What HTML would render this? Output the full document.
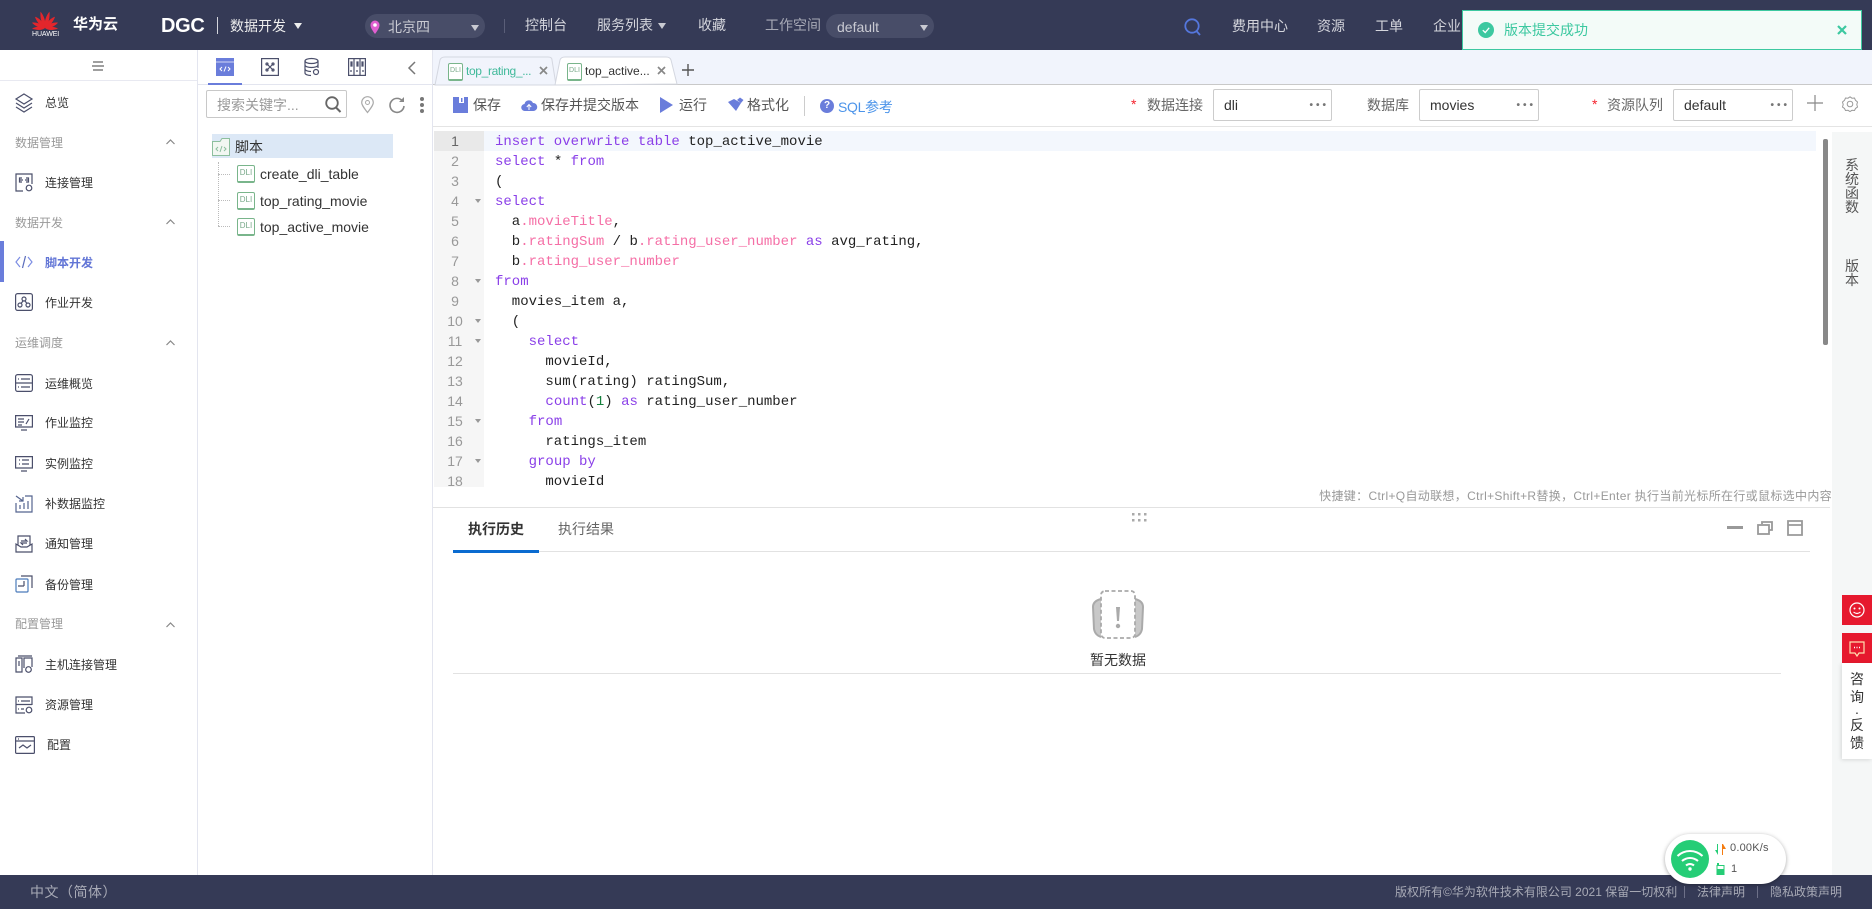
<!DOCTYPE html>
<html lang="zh-CN"><head><meta charset="utf-8"><title>DGC</title>
<style>
*{box-sizing:border-box}
html,body{margin:0;padding:0;width:1872px;height:909px;overflow:hidden;background:#fff;font-family:"Liberation Sans","Noto Sans CJK SC",sans-serif;color:#333}
.a{position:absolute}
.t{position:absolute;white-space:nowrap;line-height:20px;height:20px;font-size:14px}
.hd{color:#d4d5dc}
.s{font-size:12px;color:#333}
.sec{font-size:12px;color:#999;left:15px}
svg{position:absolute;overflow:visible}
.ic{fill:none;stroke:#4b4f6b;stroke-width:1.2}
.code{position:absolute;left:495px;top:131px;width:1320px;height:356px;overflow:hidden;font:14px/20px "Liberation Mono",monospace;color:#222;white-space:pre;padding-top:1px}
.code div{height:20px}
.k{color:#8a3fe8}.p{color:#f56fa6}
.ln{position:absolute;left:434px;top:131px;width:50px;height:356px;overflow:hidden;background:#f6f6f6;color:#999;font-size:14px;line-height:20px}
.ln div{height:20px;text-align:center;padding-right:8px}
.fold{position:absolute;left:475px;width:0;height:0;border-left:3.5px solid transparent;border-right:3.5px solid transparent;border-top:4px solid #999}
.sel{position:absolute;top:89px;height:32px;background:#fff;border:1px solid #ccc;border-radius:2px;font-size:14px;line-height:31px;padding-left:10px;color:#333}
.sel i{position:absolute;right:2px;top:0;font-style:normal;color:#777;font-size:10px;letter-spacing:3px;font-weight:bold}
.tri{position:absolute;width:0;height:0;border-left:4px solid transparent;border-right:4px solid transparent;border-top:6px solid #c9cad2}
.dli{position:absolute;width:18px;height:18px;border:1px solid #79b58b;border-bottom:2.5px solid #79b58b;border-radius:2px;font-size:8px;line-height:13px;text-align:center;color:#79a98a;background:#fff}
</style></head><body>

<!-- header -->
<div class="a" style="left:0;top:0;width:1872px;height:50px;background:#353a56"></div>
<svg style="left:32px;top:10px" width="26" height="19" viewBox="-13 -18 26 19">
<g fill="#e3262c"><path d="M0 0C-3 -5 -2.500 -12 -1 -17C1.500 -13 2.500 -5 0 0Z" transform="rotate(-12)"/><path d="M0 0C-3 -5 -2.500 -12 -1 -17C1.500 -13 2.500 -5 0 0Z" transform="rotate(12) scale(-1 1)"/><path d="M0 0C-3 -5 -2.500 -11 -1 -15C1.500 -12 2.500 -5 0 0Z" transform="rotate(-38)"/><path d="M0 0C-3 -5 -2.500 -11 -1 -15C1.500 -12 2.500 -5 0 0Z" transform="rotate(38) scale(-1 1)"/><path d="M0 0C-3 -4 -2.500 -10 -1 -14C1.500 -11 2.500 -4 0 0Z" transform="rotate(-64)"/><path d="M0 0C-3 -4 -2.500 -10 -1 -14C1.500 -11 2.500 -4 0 0Z" transform="rotate(64) scale(-1 1)"/><path d="M0 0C-3 -3 -2.500 -9 -1 -13C1 -10 2 -4 0 0Z" transform="rotate(-88)"/><path d="M0 0C-3 -3 -2.500 -9 -1 -13C1 -10 2 -4 0 0Z" transform="rotate(88) scale(-1 1)"/></g></svg>
<div class="t" style="left:32px;top:25px;color:#fff;font-size:7px;letter-spacing:-.1px">HUAWEI</div>
<div class="t" style="left:73px;top:15px;color:#fff;font-size:15px;font-weight:bold">华为云</div>
<div class="t" style="left:161px;top:16px;color:#fff;font-size:20px;font-weight:bold;letter-spacing:-.3px">DGC</div>
<div class="a" style="left:217px;top:17px;width:1px;height:17px;background:#d4d5dc"></div>
<div class="t hd" style="left:230px;top:16px;color:#eee">数据开发</div>
<div class="tri" style="left:294px;top:23px;border-top-color:#eee"></div>
<div class="a" style="left:365px;top:14px;width:120px;height:24px;border-radius:12px;background:#484d68"></div>
<svg style="left:370px;top:20px" width="10" height="14" viewBox="0 0 10 14"><path d="M5 14C2 10 .5 7.500 .5 5A4.500 4.500 0 0 1 9.500 5C9.500 7.500 8 10 5 14Z" fill="#e05fd0"/><circle cx="5" cy="5" r="1.800" fill="#fff"/></svg>
<div class="t hd" style="left:388px;top:17px;color:#c9cad2">北京四</div>
<div class="tri" style="left:471px;top:25px"></div>
<div class="a" style="left:504px;top:19px;width:1px;height:14px;background:#5a5e78"></div>
<div class="t hd" style="left:525px;top:15px">控制台</div>
<div class="t hd" style="left:597px;top:15px">服务列表</div>
<div class="tri" style="left:658px;top:23px"></div>
<div class="t hd" style="left:698px;top:15px">收藏</div>
<div class="t" style="left:765px;top:15px;color:#a7a9b6">工作空间</div>
<div class="a" style="left:826px;top:14px;width:108px;height:24px;border-radius:12px;background:#484d68"></div>
<div class="t" style="left:837px;top:17px;color:#c9cad2">default</div>
<div class="tri" style="left:920px;top:25px"></div>
<svg style="left:1184px;top:18px" width="18" height="18" viewBox="0 0 18 18"><circle cx="8" cy="8" r="6.700" fill="none" stroke="#5577dd" stroke-width="1.800"/><path d="M12.500 13L16 17" stroke="#5577dd" stroke-width="1.800"/></svg>
<div class="t hd" style="left:1232px;top:16px">费用中心</div>
<div class="t hd" style="left:1317px;top:16px">资源</div>
<div class="t hd" style="left:1375px;top:16px">工单</div>
<div class="t hd" style="left:1433px;top:16px">企业</div>

<!-- toast -->
<div class="a" style="left:1462px;top:10px;width:400px;height:40px;background:#f3fbf8;border:1px solid #3cc8a0"></div>
<svg style="left:1478px;top:22px" width="16" height="16" viewBox="0 0 16 16"><circle cx="8" cy="8" r="8" fill="#3cc8a0"/><path d="M4.800 8.200L7.200 10.500L11.200 5.800" fill="none" stroke="#fff" stroke-width="1.300"/></svg>
<div class="t" style="left:1504px;top:20px;color:#3cc8a0">版本提交成功</div>
<svg style="left:1837px;top:25px" width="10" height="10" viewBox="0 0 10 10"><path d="M1 1L9 9M9 1L1 9" stroke="#3cc8a0" stroke-width="2.200"/></svg>

<!-- sidebar -->
<div class="a" style="left:197px;top:50px;width:1px;height:825px;background:#e3e5ef"></div>
<div class="a" style="left:0;top:80px;width:197px;height:1px;background:#e8e9f1"></div>
<svg style="left:92px;top:61px" width="12" height="10" viewBox="0 0 12 10"><path d="M1 1H11M0 5H12M1 9H11" stroke="#666" stroke-width="1.300"/></svg>

<svg class="ic" style="left:15px;top:93px" width="18" height="20" viewBox="0 0 18 20"><path d="M9 1L17 6L9 11L1 6ZM1 10L9 15L17 10M1 14L9 19L17 14"/></svg>
<div class="t s" style="left:45px;top:93px">总览</div>
<div class="t sec" style="top:133px">数据管理</div>
<svg class="ic" style="left:166px;top:139px" width="9" height="6" viewBox="0 0 9 6"><path d="M.5 5L4.500 1L8.500 5" stroke="#888"/></svg>
<svg class="ic" style="left:15px;top:173px" width="18" height="19" viewBox="0 0 18 19"><path d="M8 18H1V1H17V11"/><path d="M5 7H8M10 7H13M7 5H4.500V9H7M11 5H13.500V9H11"/><circle cx="14" cy="15" r="2.800"/></svg>
<div class="t s" style="left:45px;top:173px">连接管理</div>
<div class="t sec" style="top:213px">数据开发</div>
<svg class="ic" style="left:166px;top:219px" width="9" height="6" viewBox="0 0 9 6"><path d="M.5 5L4.500 1L8.500 5" stroke="#888"/></svg>
<div class="a" style="left:0;top:241px;width:4px;height:41px;background:#6a7ddb"></div>
<svg style="left:15px;top:255px" width="18" height="14" viewBox="0 0 18 14"><path d="M5 2L1 7L5 12M13 2L17 7L13 12" fill="none" stroke="#7c8de3" stroke-width="1.200"/><path d="M10.500 1L7.500 13" fill="none" stroke="#5b6dbb" stroke-width="1.200"/></svg>
<div class="t s" style="left:45px;top:253px;color:#6275d6;font-weight:bold">脚本开发</div>
<svg class="ic" style="left:15px;top:293px" width="18" height="18" viewBox="0 0 18 18"><rect x=".6" y=".6" width="16.800" height="16.800" rx="2"/><circle cx="9" cy="6" r="2"/><circle cx="5" cy="12" r="2"/><circle cx="13" cy="12" r="2"/><path d="M8 8L6 10.500M10 8L12 10.500"/></svg>
<div class="t s" style="left:45px;top:293px">作业开发</div>
<div class="t sec" style="top:333px">运维调度</div>
<svg class="ic" style="left:166px;top:340px" width="9" height="6" viewBox="0 0 9 6"><path d="M.5 5L4.500 1L8.500 5" stroke="#888"/></svg>
<svg class="ic" style="left:15px;top:374px" width="18" height="18" viewBox="0 0 18 18"><rect x=".6" y=".6" width="16.800" height="16.800" rx="2"/><path d="M1 9H17M3 5H4M6 5H15M3 13H4M6 13H15"/></svg>
<div class="t s" style="left:45px;top:374px">运维概览</div>
<svg class="ic" style="left:15px;top:415px" width="18" height="16" viewBox="0 0 18 16"><path d="M.6 .6H17.400V12H.6ZM6 15H12M3 4H9M3 7H9M3 10H7M11 9L14 4"/></svg>
<div class="t s" style="left:45px;top:413px">作业监控</div>
<svg class="ic" style="left:15px;top:456px" width="18" height="16" viewBox="0 0 18 16"><path d="M.6 .6H17.400V12H.6ZM6 15H12M4 4H5M7 4H14M4 8H5M7 8H14"/></svg>
<div class="t s" style="left:45px;top:454px">实例监控</div>
<svg class="ic" style="left:15px;top:495px" width="18" height="18" viewBox="0 0 18 18"><path d="M1 8V17H17V1H10M1 1L8 6M8 2V6H4M5 14V10M9 14V8M13 14V6" stroke="#55648f"/></svg>
<div class="t s" style="left:45px;top:494px">补数据监控</div>
<svg class="ic" style="left:15px;top:535px" width="18" height="18" viewBox="0 0 18 18"><path d="M1 9V17H17V9L12 12H6ZM3 10V1H15V10M6 6H12L10 4M12 8H6L8 10"/></svg>
<div class="t s" style="left:45px;top:534px">通知管理</div>
<svg class="ic" style="left:15px;top:575px" width="18" height="18" viewBox="0 0 18 18"><rect x="1" y="4" width="12" height="13" rx="1" stroke="#4b7bbb"/><path d="M6 1H17V13M3 11H9M9 6V11"/></svg>
<div class="t s" style="left:45px;top:575px">备份管理</div>
<div class="t sec" style="top:614px">配置管理</div>
<svg class="ic" style="left:166px;top:622px" width="9" height="6" viewBox="0 0 9 6"><path d="M.5 5L4.500 1L8.500 5" stroke="#888"/></svg>
<svg class="ic" style="left:15px;top:655px" width="18" height="18" viewBox="0 0 18 18"><path d="M1 17V3H7V17ZM9 13V3H17V12M4 6V11M3 1H17"/><circle cx="13.500" cy="14.500" r="2.800"/></svg>
<div class="t s" style="left:45px;top:655px">主机连接管理</div>
<svg class="ic" style="left:15px;top:696px" width="18" height="18" viewBox="0 0 18 18"><path d="M10 17H1V1H17V9M1 8.500H17M3 5H4M6 5H15M3 13H4M6 13H9"/><circle cx="14" cy="14" r="2.800"/></svg>
<div class="t s" style="left:45px;top:695px">资源管理</div>
<svg class="ic" style="left:15px;top:736px" width="20" height="18" viewBox="0 0 20 18"><rect x=".6" y=".6" width="18.800" height="16.800" rx="1"/><path d="M1 5H19M3 3H4M4 12L8 9L12 12L16 9"/></svg>
<div class="t s" style="left:47px;top:735px">配置</div>

<!-- tree panel -->
<div class="a" style="left:198px;top:84px;width:234px;height:1px;background:#e3e5ef"></div>
<div class="a" style="left:432px;top:50px;width:1px;height:825px;background:#e3e5ef"></div>
<div class="a" style="left:208px;top:83px;width:34px;height:2px;background:#6a7ddb"></div>
<svg style="left:216px;top:58px" width="18" height="18" viewBox="0 0 18 18"><rect width="18" height="18" fill="#6a7ddb"/><rect y="3.500" width="18" height="1" fill="#fff" opacity=".7"/><path d="M6 9L4 11L6 13M12 9L14 11L12 13M10 8.500L8 13.500" stroke="#fff" fill="none"/></svg>
<svg class="ic" style="left:261px;top:58px" width="18" height="18" viewBox="0 0 18 18"><rect x=".6" y=".6" width="16.800" height="16.800"/><circle cx="6" cy="6" r="1"/><circle cx="12" cy="6" r="1"/><circle cx="6" cy="12" r="1"/><circle cx="12" cy="12" r="1"/><path d="M6 6L12 12M12 6L6 12"/></svg>
<svg class="ic" style="left:304px;top:58px" width="16" height="18" viewBox="0 0 16 18"><ellipse cx="7.500" cy="3" rx="6.500" ry="2.500"/><path d="M1 3V15C1 16.500 4 17.500 7 17.500M14 3V10M1 7C1 8.500 4 9.500 7.500 9.500S14 8.500 14 7M1 11C1 12.500 4 13.500 7 13.500"/><circle cx="12" cy="14" r="2.500"/></svg>
<svg class="ic" style="left:348px;top:58px" width="18" height="18" viewBox="0 0 18 18"><rect x=".6" y=".6" width="16.800" height="16.800"/><path d="M6 1V17M12 1V17M3 4V8H4V4ZM9 4V8H10V4ZM14 4V8H15V4ZM2 13H4M8 13H10M14 13H16"/></svg>
<svg style="left:408px;top:61px" width="8" height="14" viewBox="0 0 8 14"><path d="M7 1L1 7L7 13" fill="none" stroke="#777" stroke-width="1.500"/></svg>
<div class="a" style="left:206px;top:90px;width:141px;height:28px;border:1px solid #c8c8c8;border-radius:2px"></div>
<div class="t" style="left:217px;top:95px;color:#999">搜索关键字...</div>
<svg style="left:325px;top:96px" width="17" height="17" viewBox="0 0 17 17"><circle cx="7" cy="7" r="5.800" fill="none" stroke="#666" stroke-width="1.800"/><path d="M11 11.500L15.500 16" stroke="#666" stroke-width="2"/></svg>
<svg style="left:361px;top:96px" width="13" height="17" viewBox="0 0 13 17"><path d="M6.500 16.500C3 12 .7 9 .7 6.500A5.800 5.800 0 0 1 12.300 6.500C12.300 9 10 12 6.500 16.500Z" fill="none" stroke="#aaa" stroke-width="1.200"/><circle cx="6.500" cy="6.500" r="2" fill="none" stroke="#aaa"/></svg>
<svg style="left:389px;top:96px" width="16" height="17" viewBox="0 0 16 17"><path d="M13.500 5A7 7 0 1 0 15 10" fill="none" stroke="#888" stroke-width="1.600"/><path d="M15 1V6H10" fill="#888"/></svg>
<div class="a" style="left:420px;top:97px;width:4px;height:4px;border-radius:50%;background:#777;box-shadow:0 6px 0 #777,0 12px 0 #777"></div>
<div class="a" style="left:212px;top:134px;width:181px;height:24px;background:#dce8f6"></div>
<svg style="left:212px;top:138px" width="18" height="18" viewBox="0 0 18 18"><path d="M.5 3.500H8L10 .5H17.500V17.500H.5Z" fill="#f2f7f2" stroke="#8dbf9e"/><path d="M6 9L4 11L6 13M12 9L14 11L12 13M10 8L8 14" stroke="#8dbf9e" fill="none"/></svg>
<div class="t" style="left:235px;top:137px">脚本</div>
<div class="a" style="left:218px;top:162px;height:64px;border-left:1px dotted #bbb"></div>
<div class="a" style="left:218px;top:174px;width:12px;border-top:1px dotted #bbb"></div>
<div class="a" style="left:218px;top:200px;width:12px;border-top:1px dotted #bbb"></div>
<div class="a" style="left:218px;top:226px;width:12px;border-top:1px dotted #bbb"></div>
<div class="dli" style="left:237px;top:165px">DLI</div><div class="t" style="left:260px;top:164px">create_dli_table</div>
<div class="dli" style="left:237px;top:192px">DLI</div><div class="t" style="left:260px;top:191px">top_rating_movie</div>
<div class="dli" style="left:237px;top:218px">DLI</div><div class="t" style="left:260px;top:217px">top_active_movie</div>

<!-- tab strip -->
<div class="a" style="left:433px;top:50px;width:1439px;height:34px;background:#f1f4fc"></div>
<div class="a" style="left:433px;top:84px;width:1439px;height:1px;background:#c9c9c9"></div>
<svg style="left:434px;top:56px" width="250" height="29" viewBox="0 0 250 29"><path d="M1 29L6 4Q7 1 11 1H114Q118 1 118 4L122 29Z" fill="#f1f4fc" stroke="#d4d7e0"/><path d="M121 29L126 4Q127 1 131 1H232Q236 1 237 4L243 28Z" fill="#fff" stroke="#d4d7e0"/></svg>
<div class="dli" style="left:448px;top:63px;width:15px;height:18px;font-size:7px">DLI</div>
<div class="t" style="left:466px;top:61px;font-size:12px;color:#3fb99a;letter-spacing:-.35px">top_rating_...</div>
<svg style="left:539px;top:66px" width="9" height="9" viewBox="0 0 9 9"><path d="M1 1L8 8M8 1L1 8" stroke="#888" stroke-width="1.700"/></svg>
<div class="dli" style="left:567px;top:63px;width:15px;height:18px;font-size:7px">DLI</div>
<div class="t" style="left:585px;top:61px;font-size:12px;color:#333">top_active...</div>
<svg style="left:657px;top:66px" width="9" height="9" viewBox="0 0 9 9"><path d="M1 1L8 8M8 1L1 8" stroke="#888" stroke-width="1.700"/></svg>
<svg style="left:682px;top:64px" width="12" height="12" viewBox="0 0 12 12"><path d="M6 0V12M0 6H12" stroke="#555" stroke-width="1.400"/></svg>

<!-- toolbar -->
<div class="a" style="left:433px;top:126px;width:1439px;height:1px;background:#e4e4e4"></div>
<svg style="left:453px;top:97px" width="15" height="16" viewBox="0 0 15 16"><path d="M0 0H15V16H0Z" fill="#6a7ddb"/><rect x="6" y="0" width="5" height="6" fill="#fff"/><rect x="8" y="1" width="1.500" height="4" fill="#6a7ddb"/></svg>
<div class="t" style="left:473px;top:95px;color:#555">保存</div>
<svg style="left:521px;top:98px" width="16" height="14" viewBox="0 0 16 14"><path d="M4 13A3.500 3.500 0 0 1 3.500 6A4.500 4.500 0 0 1 12 5A4 4 0 0 1 12.500 13Z" fill="#6a7ddb"/><path d="M8 12V7M5.800 9L8 6.500L10.200 9" stroke="#fff" fill="none"/></svg>
<div class="t" style="left:541px;top:95px;color:#555">保存并提交版本</div>
<svg style="left:660px;top:97px" width="13" height="16" viewBox="0 0 13 16"><path d="M0 0L13 8L0 16Z" fill="#6a7ddb"/></svg>
<div class="t" style="left:679px;top:95px;color:#555">运行</div>
<svg style="left:728px;top:97px" width="16" height="15" viewBox="0 0 16 15"><path d="M0 5L8 14L13 6L6 2ZM9 3L12 .5L15.500 3L13 6Z" fill="#6a7ddb"/></svg>
<div class="t" style="left:747px;top:95px;color:#555">格式化</div>
<div class="a" style="left:804px;top:96px;width:1px;height:20px;background:#ccc"></div>
<div class="a" style="left:820px;top:99px;width:14px;height:14px;border-radius:50%;background:#6a7ddb;color:#fff;font-size:10px;font-weight:bold;line-height:14px;text-align:center">?</div>
<div class="t" style="left:838px;top:97px;color:#4c94ea;letter-spacing:-.3px">SQL参考</div>
<div class="t" style="left:1131px;top:94px;color:#f5222d;font-size:14px">*</div>
<div class="t" style="left:1147px;top:95px;color:#666">数据连接</div>
<div class="sel" style="left:1213px;width:119px">dli<i>•••</i></div>
<div class="t" style="left:1367px;top:95px;color:#666">数据库</div>
<div class="sel" style="left:1419px;width:120px">movies<i>•••</i></div>
<div class="t" style="left:1592px;top:94px;color:#f5222d">*</div>
<div class="t" style="left:1607px;top:95px;color:#666">资源队列</div>
<div class="sel" style="left:1673px;width:120px">default<i>•••</i></div>
<svg style="left:1807px;top:95px" width="16" height="16" viewBox="0 0 16 16"><path d="M8 0V16M0 8H16" stroke="#888" stroke-width="1.200"/></svg>
<svg style="left:1842px;top:96px" width="16" height="16" viewBox="0 0 16 16"><path d="M8 .8L10 2.200L12.500 2L13.500 4.300L15.500 6L14.800 8.500L15.500 11L13.500 12.500L12.500 14.500L10 14.300L8 15.500L6 14.300L3.500 14.500L2.500 12.500L.5 11L1.200 8.500L.5 6L2.500 4.300L3.500 2L6 2.200Z" fill="none" stroke="#999"/><circle cx="8" cy="8" r="2.800" fill="none" stroke="#999"/></svg>

<!-- editor -->
<div class="a" style="left:484px;top:131px;width:1332px;height:20px;background:#f3f7fd"></div>
<div class="ln"><div style="background:#e9e9e9;color:#666">1</div><div>2</div><div>3</div><div>4</div><div>5</div><div>6</div><div>7</div><div>8</div><div>9</div><div>10</div><div>11</div><div>12</div><div>13</div><div>14</div><div>15</div><div>16</div><div>17</div><div>18</div></div>
<div class="fold" style="top:199px"></div><div class="fold" style="top:279px"></div><div class="fold" style="top:319px"></div><div class="fold" style="top:339px"></div><div class="fold" style="top:419px"></div><div class="fold" style="top:459px"></div>
<div class="code"><div><span class="k">insert overwrite table</span> top_active_movie</div><div><span class="k">select</span> * <span class="k">from</span></div><div>(</div><div><span class="k">select</span></div><div>  a<span class="p">.movieTitle</span>,</div><div>  b<span class="p">.ratingSum</span> / b<span class="p">.rating_user_number</span> <span class="k">as</span> avg_rating,</div><div>  b<span class="p">.rating_user_number</span></div><div><span class="k">from</span></div><div>  movies_item a,</div><div>  (</div><div>    <span class="k">select</span></div><div>      movieId,</div><div>      sum(rating) ratingSum,</div><div>      <span class="k">count</span>(<span style="color:#15803d">1</span>) <span class="k">as</span> rating_user_number</div><div>    <span class="k">from</span></div><div>      ratings_item</div><div>    <span class="k">group by</span></div><div>      movieId</div></div>
<div class="a" style="left:1823px;top:139px;width:5px;height:206px;background:#888;border-radius:2px"></div>
<div class="t" style="right:40px;top:486px;font-size:12px;color:#999;letter-spacing:.33px">快捷键：Ctrl+Q自动联想，Ctrl+Shift+R替换，Ctrl+Enter 执行当前光标所在行或鼠标选中内容</div>
<div class="a" style="left:433px;top:507px;width:1397px;height:1px;background:#e2e2e2"></div>

<!-- right rail -->
<div class="a" style="left:1832px;top:132px;width:40px;height:743px;background:#f5f7f7"></div>
<div class="a" style="left:1845px;top:158px;width:14px;font-size:14px;line-height:14px;color:#555">系统函数</div>
<div class="a" style="left:1845px;top:259px;width:14px;font-size:14px;line-height:14px;color:#555">版本</div>

<!-- drag dots -->
<svg style="left:1132px;top:513px" width="17" height="9" viewBox="0 0 17 9"><g fill="#aaa"><rect x="0" y="0" width="2.500" height="2.500"/><rect x="6" y="0" width="2.500" height="2.500"/><rect x="12" y="0" width="2.500" height="2.500"/><rect x="0" y="6" width="2.500" height="2.500"/><rect x="6" y="6" width="2.500" height="2.500"/><rect x="12" y="6" width="2.500" height="2.500"/></g></svg>

<!-- bottom panel -->
<div class="t" style="left:468px;top:519px;font-weight:bold;color:#333">执行历史</div>
<div class="t" style="left:558px;top:519px;color:#666">执行结果</div>
<div class="a" style="left:453px;top:551px;width:1357px;height:1px;background:#e2e2e2"></div>
<div class="a" style="left:453px;top:550px;width:86px;height:3px;background:#0a6bd0"></div>
<div class="a" style="left:1727px;top:526px;width:16px;height:3px;background:#999"></div>
<svg style="left:1757px;top:521px" width="16" height="14" viewBox="0 0 16 14"><path d="M5 3V1H15V9H12" fill="none" stroke="#999" stroke-width="1.800"/><rect x="1" y="4" width="11" height="9" fill="#fff" stroke="#999" stroke-width="1.800"/></svg>
<svg style="left:1787px;top:520px" width="16" height="16" viewBox="0 0 16 16"><path d="M1 1H15V15H1ZM1 5H15" fill="none" stroke="#999" stroke-width="1.800"/></svg>

<svg style="left:1091px;top:589px" width="54" height="52" viewBox="0 0 54 52">
<path d="M10 10Q2 12 2 18L3 40Q4 46 10 48M44 10Q52 12 52 18L51 40Q50 46 44 48" fill="#c8c8c8" stroke="#aaa" stroke-width="2"/>
<rect x="10" y="2" width="34" height="47" rx="4" fill="#fff" stroke="#aaa" stroke-width="1.800" stroke-dasharray="4 2.500"/>
<path d="M25 18H29L28 32H26Z" fill="#aaa"/><circle cx="27" cy="37" r="2.200" fill="#aaa"/></svg>
<div class="t" style="left:1090px;top:650px;color:#333">暂无数据</div>
<div class="a" style="left:453px;top:673px;width:1328px;height:1px;background:#e2e2e2"></div>

<!-- feedback -->
<div class="a" style="left:1842px;top:595px;width:30px;height:30px;background:#e6192e"></div>
<svg style="left:1849px;top:602px" width="16" height="16" viewBox="0 0 16 16"><circle cx="8" cy="8" r="7" fill="none" stroke="#fff" stroke-width="1.200"/><circle cx="5.500" cy="6.500" r="1" fill="#fff"/><circle cx="10.500" cy="6.500" r="1" fill="#fff"/><path d="M4.500 10Q8 13 11.500 10" fill="none" stroke="#fff" stroke-width="1.100"/></svg>
<div class="a" style="left:1842px;top:633px;width:30px;height:30px;background:#e6192e"></div>
<svg style="left:1849px;top:641px" width="16" height="16" viewBox="0 0 16 16"><path d="M1 1H15V12H10L8 15L6 12H1Z" fill="none" stroke="#ffe0b0" stroke-width="1.200"/><path d="M5 6.500H6M7.500 6.500H8.500M10 6.500H11" stroke="#fff" stroke-width="1.500"/></svg>
<div class="a" style="left:1842px;top:663px;width:30px;height:96px;background:#fff;box-shadow:-1px 1px 4px rgba(0,0,0,.12);font-size:14px;line-height:18px;text-align:center;color:#333;padding-top:7px">咨<br>询<div style="height:10px;line-height:12px">·</div>反<br>馈</div>

<!-- footer -->
<div class="a" style="left:0;top:875px;width:1872px;height:34px;background:#353a56"></div>
<div class="t" style="left:30px;top:882px;color:#a8aab6;letter-spacing:.5px">中文（简体）</div>
<div class="t" style="left:1395px;top:882px;color:#a8aab6;font-size:12px">版权所有©华为软件技术有限公司 2021 保留一切权利</div>
<div class="a" style="left:1684px;top:886px;width:1px;height:12px;background:#6d7088"></div>
<div class="t" style="left:1697px;top:882px;color:#a8aab6;font-size:12px">法律声明</div>
<div class="a" style="left:1757px;top:886px;width:1px;height:12px;background:#6d7088"></div>
<div class="t" style="left:1770px;top:882px;color:#a8aab6;font-size:12px">隐私政策声明</div>

<!-- network widget -->
<div class="a" style="left:1665px;top:834px;width:121px;height:50px;border-radius:25px;background:#fff;box-shadow:0 1px 4px rgba(0,0,0,.35)"></div>
<div class="a" style="left:1671px;top:840px;width:38px;height:38px;border-radius:50%;background:#25cd76"></div>
<svg style="left:1676px;top:847px" width="28" height="24" viewBox="0 0 28 24"><path d="M1.500 9A18 18 0 0 1 26.500 9M6 14A12 12 0 0 1 22 14M10 18.500A6 6 0 0 1 18 18.500" fill="none" stroke="#fff" stroke-width="2"/><circle cx="14" cy="22" r="1.700" fill="#fff"/></svg>
<svg style="left:1715px;top:844px" width="11" height="11" viewBox="0 0 11 11"><path d="M2 6H0L3 11V0H2Z" fill="#25cd76"/><path d="M7 0H8L11 5H8V11H7Z" fill="#f57c10"/></svg>
<div class="t" style="left:1730px;top:838px;font-size:11px;color:#555;letter-spacing:.2px">0.00K/s</div>
<svg style="left:1716px;top:863px" width="9" height="12" viewBox="0 0 9 12"><rect x=".5" y="2" width="8" height="10" fill="#25cd76"/><rect x="1.500" y="3" width="6" height="3" fill="#fff"/><rect x="1" y="0" width="2" height="2" fill="#25cd76"/></svg>
<div class="t" style="left:1731px;top:859px;font-size:11px;color:#555">1</div>
</body></html>
